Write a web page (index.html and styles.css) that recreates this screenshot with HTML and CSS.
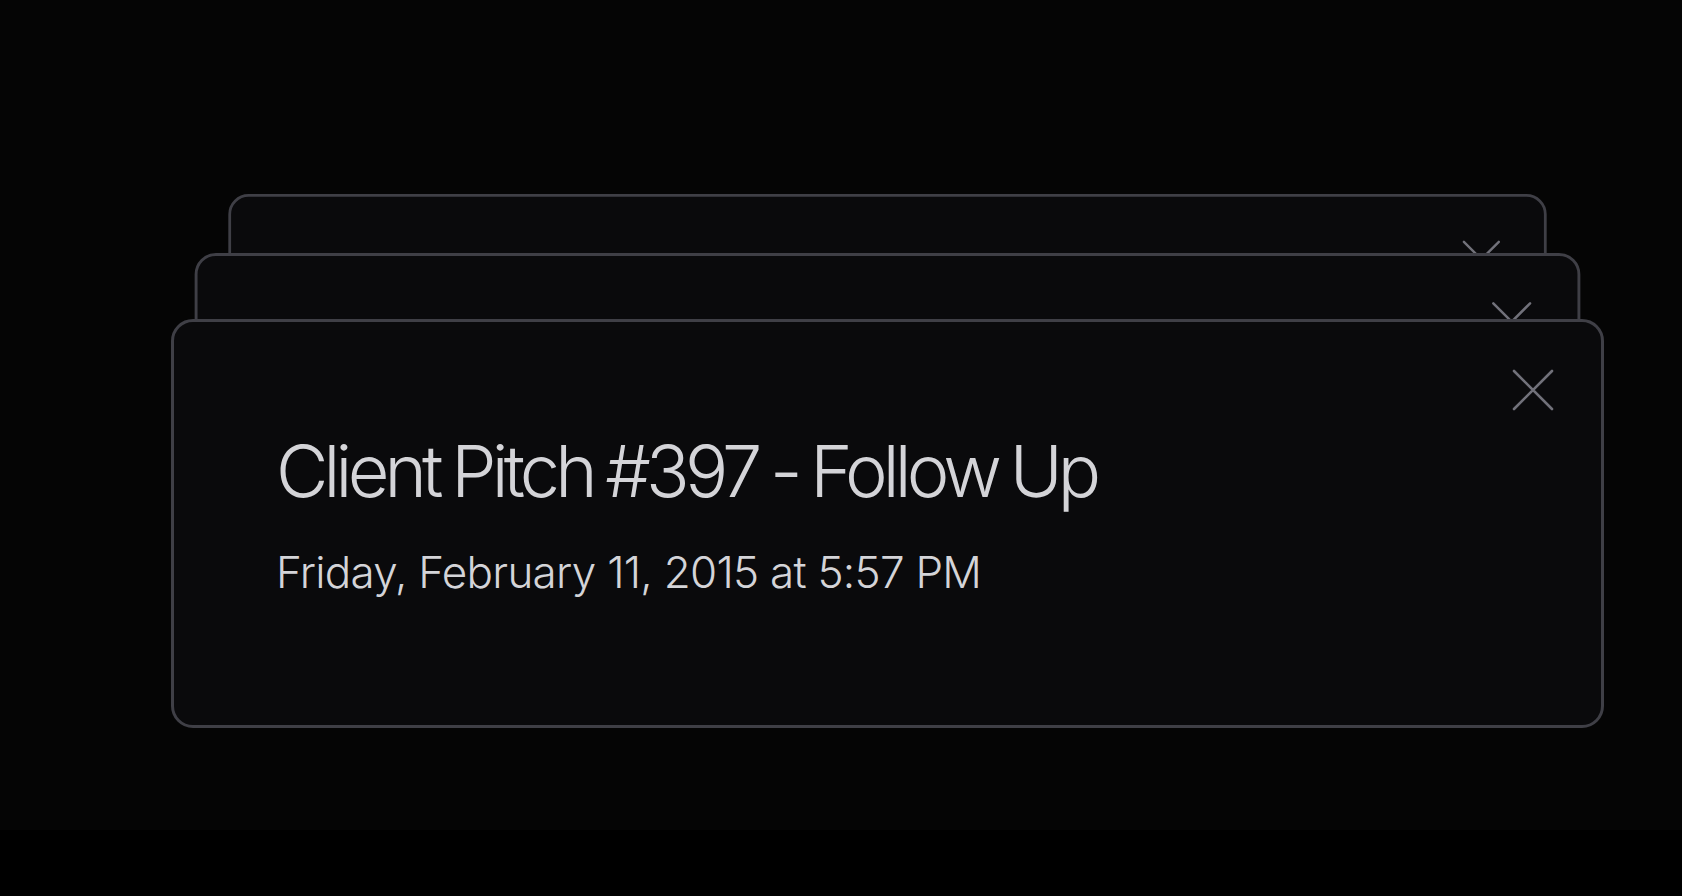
FILE: index.html
```html
<!DOCTYPE html>
<html lang="en">
<head>
    <meta charset="UTF-8">
    <meta name="viewport" content="width=device-width, initial-scale=1.0">
    <title>Toast stack</title>
    <link rel="stylesheet" href="styles.css">
</head>
<body>
    <main class="stage">
        <div class="stack">
            <div class="toast toast-back toast-third" aria-hidden="true">
                <button class="close" type="button">
                    <svg viewBox="0 0 40 40"><path d="M1 1L39 39M39 1L1 39"/></svg>
                </button>
            </div>
            <div class="toast toast-back toast-second" aria-hidden="true">
                <button class="close" type="button">
                    <svg viewBox="0 0 40 40"><path d="M1 1L39 39M39 1L1 39"/></svg>
                </button>
            </div>
            <div class="toast toast-front" role="status">
                <button class="close" type="button" aria-label="Close">
                    <svg viewBox="0 0 40 40"><path d="M1 1L39 39M39 1L1 39"/></svg>
                </button>
                <h1 class="toast-title">Client Pitch #397 - Follow Up</h1>
                <p class="toast-date">Friday, February 11, 2015 at 5:57 PM</p>
            </div>
        </div>
    </main>
</body>
</html>
```

FILE: styles.css
```css
* {
    margin: 0;
    padding: 0;
    box-sizing: border-box;
}
:root {
    --page-bg: #050505;
    --card-bg: #0a0a0c;
    --card-border: #3f3f46;
    --text-color: #d4d4d8;
    --icon-color: #71717a;
}
body {
    background-color: #000;
    font-family: 'Inter', 'Liberation Sans', sans-serif;
    color: var(--text-color);
}
.stage {
    height: 830px;
    background-color: var(--page-bg);
    padding: 319px 0 0 171px;
}
.stack {
    position: relative;
    width: 1433px;
}
.toast {
    position: relative;
    width: 1433px;
    height: 409px;
    background-color: var(--card-bg);
    border: 3px solid var(--card-border);
    border-radius: 22px;
    padding: 106px 102px 0;
}
.toast-back {
    position: absolute;
    top: 0;
    left: 0;
    transform-origin: top center;
}
.toast-second {
    transform: translateY(-66px) scale(0.967);
}
.toast-third {
    transform: translateY(-125px) scale(0.92);
}
.close {
    position: absolute;
    top: 48px;
    right: 48px;
    width: 40px;
    height: 40px;
    background: none;
    border: none;
    cursor: pointer;
}
.close svg {
    display: block;
    width: 40px;
    height: 40px;
    overflow: visible;
    fill: none;
    stroke: var(--icon-color);
    stroke-width: 2.6;
    stroke-linecap: round;
}
.toast-title {
    font-size: 72px;
    font-weight: 300;
    line-height: 1.2;
    letter-spacing: -4.8px;
    word-spacing: -3px;
}
.toast-date {
    margin-top: 32px;
    font-size: 44px;
    font-weight: 350;
    line-height: 1.2;
    letter-spacing: -0.73px;
}
```
